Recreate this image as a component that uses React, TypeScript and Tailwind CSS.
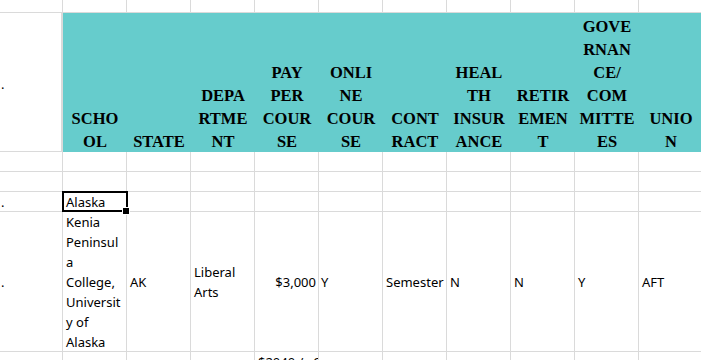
import React from "react";

const headers: string[][] = [
  ["SCHO", "OL"],
  ["STATE"],
  ["DEPA", "RTME", "NT"],
  ["PAY", "PER", "COUR", "SE"],
  ["ONLI", "NE", "COUR", "SE"],
  ["CONT", "RACT"],
  ["HEAL", "TH", "INSUR", "ANCE"],
  ["RETIR", "EMEN", "T"],
  ["GOVE", "RNAN", "CE/", "COM", "MITTE", "ES"],
  ["UNIO", "N"],
];

const G = "border-[#dadada]";

function Cell({
  children,
  className = "",
}: {
  children?: React.ReactNode;
  className?: string;
}) {
  return (
    <div className={`border-r border-b ${G} overflow-hidden ${className}`}>
      {children}
    </div>
  );
}

export default function App() {
  const cols = Array.from({ length: 10 }, (_, i) => i);
  const body = "font-['Noto_Sans','Open_Sans',sans-serif] text-[13px] leading-[20px] text-black";
  return (
    <div className="w-[701px] h-[360px] overflow-hidden bg-white">
      <div className="grid grid-cols-[63px_repeat(10,64px)] grid-rows-[13px_139px_20px_20px_20px_140px_60px] w-[703px]">
        {/* row 0 */}
        <Cell />
        {cols.map((i) => (
          <Cell key={`r0-${i}`} />
        ))}

        {/* header row */}
        <div className={`border-r-2 border-b ${G} flex items-center ${body}`}>
          <span className="pl-[1px] mt-[4px]">.</span>
        </div>
        {headers.map((lines, i) => (
          <div
            key={`h-${i}`}
            className="bg-[#66cccc] flex flex-col justify-end items-center font-['Liberation_Serif',serif] font-bold text-[16.5px] leading-[23px] text-black"
          >
            <div className="-mb-px flex flex-col items-center">
              {lines.map((l, j) => (
                <span key={j} className="whitespace-nowrap">
                  {l}
                </span>
              ))}
            </div>
          </div>
        ))}

        {/* empty rows */}
        <Cell />
        {cols.map((i) => (
          <Cell key={`r2-${i}`} />
        ))}
        <Cell />
        {cols.map((i) => (
          <Cell key={`r3-${i}`} />
        ))}

        {/* Alaska row */}
        <Cell className={`flex items-center ${body}`}>
          <span className="pl-[1px]">.</span>
        </Cell>
        <div className={`relative border-r border-b ${G} ${body} pl-[3px]`}>
          Alaska
          <div className="absolute left-[-1px] top-[-1px] w-[66px] h-[21px] border-2 border-black" />
          <div className="absolute left-[60px] top-[16px] w-[6px] h-[6px] bg-black outline outline-1 outline-white" />
        </div>
        {cols.slice(1).map((i) => (
          <Cell key={`r4-${i}`} />
        ))}

        {/* big row */}
        <Cell className={`flex items-center ${body}`}>
          <span className="pl-[1px]">.</span>
        </Cell>
        <Cell className={`${body} pl-[3px] flex flex-col`}>
          <span>Kenia</span>
          <span>Peninsul</span>
          <span>a</span>
          <span>College,</span>
          <span>Universit</span>
          <span>y of</span>
          <span>Alaska</span>
        </Cell>
        <Cell className={`${body} pl-[3px] flex items-center`}>AK</Cell>
        <Cell className={`${body} pl-[3px] flex flex-col justify-center`}>
          <span>Liberal</span>
          <span>Arts</span>
        </Cell>
        <Cell className={`${body} pr-[2px] flex items-center justify-end`}>$3,000</Cell>
        <Cell className={`${body} pl-[2px] flex items-center`}>Y</Cell>
        <Cell className={`${body} pl-[3px] flex items-center`}>Semester</Cell>
        <Cell className={`${body} pl-[3px] flex items-center`}>N</Cell>
        <Cell className={`${body} pl-[3px] flex items-center`}>N</Cell>
        <Cell className={`${body} pl-[3px] flex items-center`}>Y</Cell>
        <Cell className={`${body} pl-[3px] flex items-center`}>AFT</Cell>

        {/* last row */}
        <Cell />
        <Cell />
        <Cell />
        <Cell />
        <Cell className={`${body} pl-[3px] whitespace-nowrap`}>$2040 / s6</Cell>
        <Cell />
        <Cell />
        <Cell />
        <Cell />
        <Cell />
        <Cell />
      </div>
    </div>
  );
}
